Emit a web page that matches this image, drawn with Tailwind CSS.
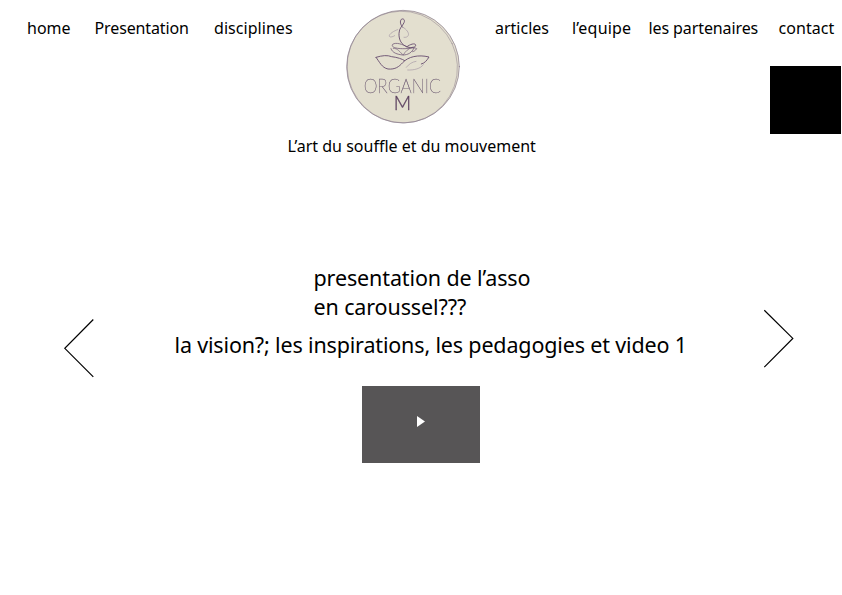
<!DOCTYPE html>
<html lang="fr">
<head>
<meta charset="utf-8">
<title>Organic M</title>
<script src="https://cdn.jsdelivr.net/npm/@tailwindcss/browser@4"></script>
</head>
<body class="bg-white text-black font-['Noto_Sans','Open_Sans',sans-serif]">
<div class="w-[842px] h-[595px] overflow-hidden flex flex-col">
  <header class="flex h-[136px] shrink-0">
    <nav class="w-[340px] pl-[27px] pt-[18px] grid grid-cols-[67.5px_119.5px_auto] content-start text-[16px] leading-[20px] whitespace-nowrap">
      <a>home</a>
      <a class="tracking-[-0.12px]">Presentation</a>
      <a class="tracking-[0.05px]">disciplines</a>
    </nav>
    <!-- Logo -->
    <svg class="w-[126px] h-[126px] mt-1 shrink-0 will-change-transform" viewBox="0 0 378 378" fill="none" stroke-linecap="round">
      <circle cx="189" cy="188" r="169" fill="#e3dfcf" stroke="#85778a" stroke-width="2"/>
      <ellipse cx="187" cy="189" rx="165" ry="168" stroke="#8a7b8c" stroke-width="1.3" transform="rotate(-25 187 189)"/>
      <g stroke="#6a5171" stroke-width="2.8">
        <path d="M188 70C181 62 179 52 184 46C190 42 196 48 192 56C188 66 177 72 177 88C176 108 185 123 202 129C216 133 228 130 227 123C225 116 210 121 201 128"/>
        <path d="M201 128C188 121 168 114 158 121C152 130 170 134 188 134C207 135 222 128 230 134C226 140 222 142 218 143" stroke-width="2.2"/>
        <path d="M153 134C157 147 172 151 188 153C204 153 216 146 222 132" stroke-width="2.2"/>
        <path d="M160 133C174 132 180 146 190 153C195 143 205 133 219 129" stroke-width="1.8"/>
        <path d="M108 160C128 154 142 153 155 158C172 160 187 165 194 170"/>
        <path d="M108 160C119 174 125 191 144 195C166 197 177 188 188 176C204 158 235 151 267 159C260 170 255 177 244 180"/>
      </g>
      <g stroke="#a497a5" stroke-width="2">
        <path d="M173 77C163 80 146 90 148 97C151 101 160 98 164 95"/>
        <path d="M189 70C199 75 208 87 205 94C203 99 197 101 192 100"/>
        <path d="M203 198C222 199 242 194 250 182M199 190C207 180 216 174 228 172"/>
      </g>
      <text font-family="Lato, sans-serif" font-size="58" stroke-width="0.9"><tspan x="71" y="266" textLength="232" lengthAdjust="spacingAndGlyphs" font-weight="200" fill="#77667a" stroke="#77667a">ORGANIC</tspan><tspan x="161" y="319" textLength="52" lengthAdjust="spacingAndGlyphs" font-weight="300" fill="#5a3f5e" stroke="#5a3f5e">M</tspan></text>
    </svg>
    <div class="w-[376px]">
      <nav class="pl-[29px] pt-[18px] grid grid-cols-[77px_76.5px_130px_auto] text-[16px] leading-[20px] whitespace-nowrap">
        <a>articles</a>
        <a class="tracking-[0.2px]">l’equipe</a>
        <a class="tracking-[-0.1px]">les partenaires</a>
        <a class="tracking-[0.05px]">contact</a>
      </nav>
      <div class="ml-auto mr-[1px] mt-[27.5px] w-[71px] h-[68.5px] bg-black"></div>
    </div>
  </header>

  <p class="ml-[287.5px] text-[16px] leading-[20px] whitespace-nowrap">L’art du souffle et du mouvement</p>

  <main class="mt-[107px] flex">
    <svg class="w-[32px] h-[60px] ml-[63px] mt-[55px] shrink-0" viewBox="0 0 32 60" fill="none" stroke="#000" stroke-width="1.2"><path d="M30.3 1.5L1.8 30.3L30.3 58.8"/></svg>
    <section class="w-[668px] flex flex-col text-[21.5px] leading-[29px] tracking-[-0.12px] whitespace-nowrap">
      <p class="ml-[218.5px]">presentation de l’asso<br>en caroussel???</p>
      <p class="ml-[79.5px] mt-[8.5px] tracking-[-0.16px]">la vision?; les inspirations, les pedagogies et video 1</p>
      <div class="ml-[267px] mt-[27.5px] w-[118px] h-[77px] bg-[#575556]">
        <svg class="w-[8px] h-[11px] ml-[55px] mt-[30px]" viewBox="0 0 8 11" fill="#fff"><path d="M0 0L8 5.5L0 11Z"/></svg>
      </div>
    </section>
    <svg class="w-[32px] h-[60px] mt-[45px] shrink-0" viewBox="0 0 32 60" fill="none" stroke="#000" stroke-width="1.2"><path d="M1.3 2.2L29.8 30.4L1.3 59.2"/></svg>
  </main>
</div>
</body>
</html>
